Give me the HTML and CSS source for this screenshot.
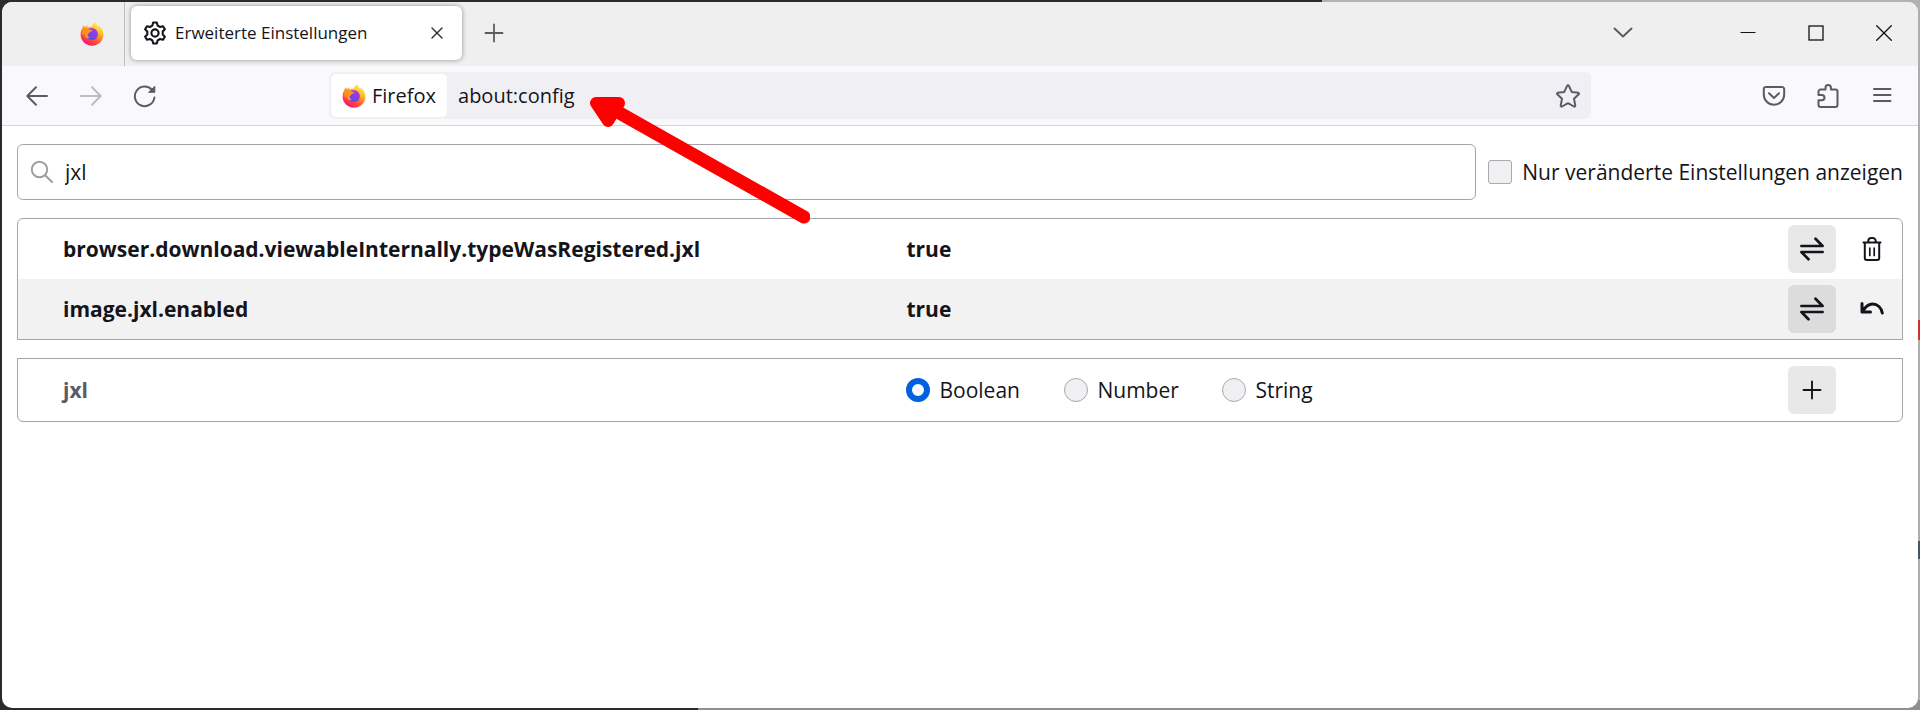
FILE: index.html
```html
<!DOCTYPE html>
<html lang="de">
<head>
<meta charset="utf-8">
<title>Erweiterte Einstellungen</title>
<link rel="stylesheet" href="styles.css">
</head>
<body>
<svg class="defs" aria-hidden="true">
  <defs>
    <linearGradient id="fire" x1="0.8" y1="0.05" x2="0.3" y2="1">
      <stop offset="0" stop-color="#fff44f"/>
      <stop offset="0.3" stop-color="#ffc22e"/>
      <stop offset="0.55" stop-color="#ff7a2a"/>
      <stop offset="0.8" stop-color="#ff3647"/>
      <stop offset="1" stop-color="#e31587"/>
    </linearGradient>
    <linearGradient id="globe" x1="0.7" y1="0" x2="0.3" y2="1">
      <stop offset="0" stop-color="#b833e1"/>
      <stop offset="0.4" stop-color="#8a3fe8"/>
      <stop offset="1" stop-color="#5b4fd8"/>
    </linearGradient>
    <linearGradient id="fox" x1="0" y1="0" x2="1" y2="0.6">
      <stop offset="0" stop-color="#ff8a16"/>
      <stop offset="1" stop-color="#ff9a2c"/>
    </linearGradient>
    <symbol id="firefox" viewBox="0 0 24 24">
      <path fill="url(#fire)" d="M15.400 0c0.200 2.200 1.600 3.200 3.200 4.800c-0.100-0.500 0.100-1 0.300-1.300c2.800 2 4.600 5.600 4.600 9.100c0 6.200-5.100 11.200-11.400 11.200C5.700 23.800 0.600 18.900 0.600 12.600c0-3.200 1-5.500 1.900-6.700c0.100-1 0.300-2 0.800-2.600c0.500 0.600 1 1.200 1.600 1.600c1-0.800 1.700-1.300 2.600-1.600c-0.200 1-0.100 1.600 0.100 2.200c1.600-1 3-1.200 4.100-0.800c0.400-1.700 1.900-3.700 3.700-4.700z"/>
      <path fill="url(#globe)" d="M8.500 6.700c2.500-1.200 6-0.600 7.900 1.600c2.100 2.400 1.900 6-0.200 8.100c-2.300 2.200-6.300 2.200-8.500-0.100c-1.600-1.700-2-4.300-1.200-6.300z"/>
      <path fill="url(#fox)" d="M2.700 6.600c1.700-0.900 3.500-0.800 5-0.200c1.500 1.100 2.800 1.200 4.600 1.500c-0.200 1.200-1.400 1.500-2.500 2.100c-0.800 0.500-0.500 1.300-1.300 1.500c-0.700 0.300-1 1.100-0.800 2c0.300 1 1 1.600 1.900 1.900c-0.900 0.700-2 1-3 0.700c-1.600-1.100-2.200-2.900-1.900-4.600c-0.800 0.300-1.400 1.300-1.600 2.300c-1.200-2.200-1.400-5.100-0.400-7.200z"/>
    </symbol>
    <symbol id="toggle" viewBox="0 0 24 24">
      <path d="M1.400 9H22.600L15.500 1.700M22.600 15H1.400L8.500 22.300" fill="none" stroke="currentColor" stroke-width="2.700" stroke-linecap="round" stroke-linejoin="round"/>
    </symbol>
  </defs>
</svg>

<div class="window">
  <header class="titlebar">
    <div class="pinned"><button class="plain" aria-label="Firefox"><svg class="i24"><use href="#firefox"/></svg></button></div>
    <div class="tab">
      <svg class="i24" viewBox="0 0 24 24" fill="none" stroke="#15141a" stroke-width="2.100" stroke-linejoin="round"><path d="M9.400 4.600L10.200 1.500H13.800L14.600 4.600L17.100 6L20 5.200L21.900 8.300L19.700 10.500V13.500L21.900 15.700L20 18.800L17.100 18L14.600 19.400L13.800 22.500H10.200L9.400 19.400L6.900 18L4 18.800L2.100 15.700L4.300 13.500V10.500L2.100 8.300L4 5.200L6.900 6Z"/><circle cx="12" cy="12" r="3.600"/></svg>
      <span class="tab-title">Erweiterte Einstellungen</span>
      <button class="plain tab-close" aria-label="Tab schließen"><svg class="i12" viewBox="0 0 12 12"><path d="M1 1L11 11M11 1L1 11" stroke="#2b2a33" stroke-width="1.400" stroke-linecap="round"/></svg></button>
    </div>
    <button class="plain new-tab" aria-label="Neuer Tab"><svg class="i20" viewBox="0 0 20 20"><path d="M10 1.500V18.500M1.500 10H18.500" stroke="#5b5b66" stroke-width="1.800" stroke-linecap="round"/></svg></button>
    <div class="caption">
      <button class="plain list-tabs" aria-label="Tabs auflisten"><svg class="i20" viewBox="0 0 20 20"><path d="M1.500 5.500L10 13.500L18.500 5.500" fill="none" stroke="#5b5b66" stroke-width="2" stroke-linecap="round" stroke-linejoin="round"/></svg></button>
      <button class="plain" aria-label="Minimieren"><svg class="i16" viewBox="0 0 16 16"><path d="M0.500 7.500H15.500" stroke="#111" stroke-width="1.200"/></svg></button>
      <button class="plain" aria-label="Maximieren"><svg class="i16" viewBox="0 0 16 16"><rect x="1" y="1" width="14" height="14" fill="none" stroke="#111" stroke-width="1.300"/></svg></button>
      <button class="plain" aria-label="Schließen"><svg class="i16" viewBox="0 0 16 16"><path d="M0.300 0.300L15.700 15.700M15.700 0.300L0.300 15.700" stroke="#111" stroke-width="1.300"/></svg></button>
    </div>
  </header>

  <nav class="toolbar">
    <div class="nav-buttons">
      <button class="plain" aria-label="Zurück"><svg class="i24" viewBox="0 0 24 24"><path d="M22 12H2.500M11 3.300L2.300 12L11 20.700" fill="none" stroke="#5b5b66" stroke-width="2" stroke-linecap="round" stroke-linejoin="round"/></svg></button>
      <button class="plain" aria-label="Vor" disabled><svg class="i24" viewBox="0 0 24 24"><path d="M2 12H21.500M13 3.300L21.700 12L13 20.700" fill="none" stroke="#bdbcc3" stroke-width="2" stroke-linecap="round" stroke-linejoin="round"/></svg></button>
      <button class="plain" aria-label="Neu laden"><svg class="i24" viewBox="0 0 24 24"><path d="M19 5.800A9.800 9.800 0 1 0 21.400 13.500" fill="none" stroke="#5b5b66" stroke-width="2" stroke-linecap="round"/><path d="M21.800 2.300V8.300H15.600z" fill="#5b5b66" stroke="#5b5b66" stroke-linejoin="round"/></svg></button>
    </div>
    <div class="urlbar">
      <button class="identity"><svg class="i24"><use href="#firefox"/></svg><span>Firefox</span></button>
      <input class="url" type="text" value="about:config" aria-label="Adresse">
      <button class="plain star" aria-label="Lesezeichen setzen"><svg class="i24" viewBox="0 0 24 24"><path d="M11.100 1.900a1 1 0 0 1 1.800 0L15.700 7.900L22.200 8.700a1 1 0 0 1 0.500 1.600L18 14.800L19.300 21.600a0.900 0.900 0 0 1-1.400 0.900L12 19.200L6.100 22.500a0.900 0.900 0 0 1-1.400-0.900L6 14.800L1.300 10.300a1 1 0 0 1 0.500-1.600L8.300 7.900z" fill="none" stroke="#5b5b66" stroke-width="2" stroke-linejoin="round"/></svg></button>
    </div>
    <div class="tools">
      <button class="plain" aria-label="Pocket"><svg class="i24" viewBox="0 0 24 24" fill="none" stroke="#5b5b66" stroke-width="2" stroke-linecap="round" stroke-linejoin="round"><path d="M4 3H20a2.200 2.200 0 0 1 2.200 2.200V10.500a10.200 10.200 0 0 1-20.400 0V5.200A2.200 2.200 0 0 1 4 3z"/><path d="M7 9.300L12 14L17 9.300"/></svg></button>
      <button class="plain" aria-label="Erweiterungen"><svg class="i24" viewBox="0 0 24 24" fill="none" stroke="#5b5b66" stroke-width="2" stroke-linejoin="round"><path d="M4.500 5.500H9.500V3.700a2.700 2.700 0 0 1 5.400 0V5.500H19.500a2 2 0 0 1 2 2V21a2 2 0 0 1-2 2H4.500a2 2 0 0 1-2-2V16.300H5.800a2.700 2.700 0 0 0 0-5.400H2.500V7.500a2 2 0 0 1 2-2z"/></svg></button>
      <button class="plain" aria-label="Menü"><svg class="i24" viewBox="0 0 24 24"><path d="M4 5H20.500M4 11H20.500M4 17H20.500" stroke="#5b5b66" stroke-width="2" stroke-linecap="round"/></svg></button>
    </div>
  </nav>

  <main class="content">
    <div class="search-row">
      <label class="search">
        <svg class="i24" viewBox="0 0 24 24" fill="none" stroke="#9f9fa3" stroke-width="2" stroke-linecap="round"><circle cx="9.500" cy="9.500" r="7.700"/><path d="M15.200 15.200L22 22"/></svg>
        <input type="text" value="jxl" aria-label="Einstellungsname suchen">
      </label>
      <label class="only-modified"><input type="checkbox"><span>Nur veränderte Einstellungen anzeigen</span></label>
    </div>

    <table class="prefs">
      <colgroup><col class="col-name"><col><col class="col-button"><col class="col-button"></colgroup>
      <tbody>
        <tr>
          <th scope="row">browser.download.viewableInternally.typeWasRegistered.jxl</th>
          <td class="value">true</td>
          <td class="action"><button class="box" aria-label="Umschalten"><svg class="i24"><use href="#toggle"/></svg></button></td>
          <td class="action"><button class="box ghost" aria-label="Löschen"><svg class="i24" viewBox="0 0 24 24" fill="none" stroke="#15141a" stroke-width="2" stroke-linecap="round"><path d="M3.500 5.500H20.500M8.300 5V4a3 3 0 0 1 3-3H12.700a3 3 0 0 1 3 3V5M4.800 6V21a2 2 0 0 0 2 2H17.200a2 2 0 0 0 2-2V6"/><path d="M9.800 11V18.500M14.200 11V18.500" stroke-width="1.700"/></svg></button></td>
        </tr>
        <tr>
          <th scope="row">image.jxl.enabled</th>
          <td class="value">true</td>
          <td class="action"><button class="box" aria-label="Umschalten"><svg class="i24"><use href="#toggle"/></svg></button></td>
          <td class="action"><button class="box ghost" aria-label="Zurücksetzen"><svg class="i24" viewBox="0 0 24 24" fill="none" stroke="#15141a" stroke-width="3" stroke-linecap="round" stroke-linejoin="round"><path d="M2 6.500V15H10.500M2.500 14.500C5.500 9.500 8.500 7 12.500 7c5 0 8.800 3.800 9.800 9"/></svg></button></td>
        </tr>
      </tbody>
    </table>

    <form class="add">
      <span class="add-name">jxl</span>
      <div class="types">
        <label><input type="radio" name="type" checked><span>Boolean</span></label>
        <label><input type="radio" name="type"><span>Number</span></label>
        <label><input type="radio" name="type"><span>String</span></label>
      </div>
      <button class="box" type="button" aria-label="Hinzufügen"><svg class="i20" viewBox="0 0 20 20"><path d="M10 1.500V18.500M1.500 10H18.500" stroke="#15141a" stroke-width="1.900" stroke-linecap="round"/></svg></button>
    </form>
  </main>
</div>

<svg class="pointer" viewBox="0 0 222 130" aria-hidden="true"><path d="M28 17L216 123" stroke="#f00" stroke-width="13" stroke-linecap="round"/><path d="M8 9H31L20 27Z" fill="#f00" stroke="#f00" stroke-width="12" stroke-linejoin="round"/></svg>
</body>
</html>
```
FILE: styles.css
```css
* { box-sizing: border-box; }

body {
  margin: 0;
  padding: 2px;
  min-height: 100vh;
  display: flex;
  color: #15141a;
  font: 21px/28px "Open Sans", "Noto Sans", sans-serif;
  background:
    linear-gradient(#c33, #c33) right 320px / 2px 20px no-repeat,
    linear-gradient(#456, #456) right 541px / 2px 18px no-repeat,
    linear-gradient(90deg, #2b2b2b 1322px, #b2b2b2 1322px) top / 100% 10px no-repeat,
    linear-gradient(90deg, #2b2b2b 698px, #8f8f8f 698px) bottom / 100% 10px no-repeat,
    linear-gradient(90deg, #2b2b2b 50%, #adadad 50%);
}

input, button { font: inherit; color: inherit; margin: 0; }

svg { display: block; flex: none; }
.defs { position: absolute; width: 0; height: 0; }
.i12 { width: 12px; height: 12px; }
.i16 { width: 16px; height: 16px; }
.i20 { width: 20px; height: 20px; }
.i24 { width: 24px; height: 24px; }

.window {
  flex: 1;
  min-width: 0;
  border-radius: 10px;
  background: #fff;
  overflow: hidden;
}

.plain {
  border: 0;
  padding: 0;
  background: none;
  display: flex;
  align-items: center;
  justify-content: center;
}

/* Title bar */
.titlebar {
  height: 64px;
  padding-bottom: 2px;
  background: #efefef;
  display: flex;
  align-items: center;
}
.pinned {
  width: 123px;
  height: 64px;
  margin-bottom: -2px;
  padding-right: 20px;
  border-right: 1px solid #bdbdbd;
  display: flex;
  align-items: center;
  justify-content: flex-end;
}
.tab {
  width: 331px;
  height: 54px;
  margin-left: 6px;
  padding: 0 19px 0 12px;
  border-radius: 6px;
  background: #fff;
  box-shadow: 0 0 5px rgba(0, 0, 0, 0.4);
  display: flex;
  align-items: center;
  gap: 8px;
  font-size: 17px;
}
.tab-title { flex: 1; white-space: nowrap; }
.new-tab { margin-left: 22px; }
.caption {
  margin-left: auto;
  display: flex;
  align-items: center;
}
.caption .plain { width: 68px; height: 60px; }
.caption .list-tabs { margin-right: 57px; }

/* Navigation bar */
.toolbar {
  height: 60px;
  background: #f9f9fb;
  border-bottom: 1px solid #d5d5d8;
  display: flex;
  align-items: center;
}
.nav-buttons { display: flex; gap: 30px; padding-left: 23px; }
.urlbar {
  flex: 1;
  height: 47px;
  margin: 0 171px 0 172px;
  padding: 2px 11px 2px 2px;
  border-radius: 6px;
  background: #f0f0f4;
  display: flex;
  align-items: center;
}
.identity {
  height: 43px;
  padding: 0 11px;
  border: 0;
  border-radius: 5px;
  background: #fff;
  display: flex;
  align-items: center;
  gap: 6px;
  font-size: 20px;
}
.url {
  flex: 1;
  min-width: 0;
  padding: 0 11px;
  border: 0;
  outline: 0;
  background: none;
  font-size: 20px;
}
.tools { display: flex; gap: 30px; padding-right: 24px; }

/* Page */
.content {
  padding: 18px 15px;
  display: flex;
  flex-direction: column;
  gap: 18px;
}
.search-row { display: flex; align-items: center; gap: 12px; }
.search {
  flex: 1;
  height: 56px;
  padding: 0 12px;
  border: 1px solid #a5a5a9;
  border-radius: 6px;
  display: flex;
  align-items: center;
  gap: 11px;
}
.search input {
  flex: 1;
  min-width: 0;
  padding: 0;
  border: 0;
  outline: 0;
  background: none;
}
.only-modified { display: flex; align-items: center; gap: 10px; white-space: nowrap; }
input[type="checkbox"], input[type="radio"] {
  appearance: none;
  width: 24px;
  height: 24px;
  border: 1px solid #a9a9ad;
  background: #f0f0f2;
}
input[type="checkbox"] { border-radius: 3px; }
input[type="radio"] { border-radius: 50%; }
input[type="radio"]:checked { border: 6px solid #0061e0; background: #fbfbfe; }

.prefs {
  width: 100%;
  table-layout: fixed;
  border: 1px solid #a5a5a9;
  border-radius: 6px 6px 0 0;
  border-spacing: 0;
}
.col-name { width: 47%; }
.col-button { width: 60px; }
.prefs th, .prefs td { height: 60px; padding: 0; text-align: left; font-weight: 700; }
.prefs th { padding-left: 45px; }
.prefs .value { padding-left: 3px; }
.prefs .action { padding: 0 6px; }
.prefs tr:nth-child(even) { background: #f2f2f2; }

.box {
  width: 48px;
  height: 48px;
  padding: 0;
  border: 0;
  border-radius: 6px;
  background: rgba(0, 0, 0, 0.09);
  display: flex;
  align-items: center;
  justify-content: center;
}
.box.ghost { background: none; }

.add {
  height: 64px;
  border: 1px solid #a5a5a9;
  border-radius: 0 0 6px 6px;
  display: flex;
  align-items: center;
}
.add-name {
  width: 47%;
  padding-left: 45px;
  font-weight: 700;
  color: #5b5b66;
}
.types { flex: 1; display: flex; padding-left: 3px; }
.types label { width: 158px; display: flex; align-items: center; gap: 9px; }
.add .box { margin-right: 66px; }

/* Marker arrow lying over the page */
.pointer {
  position: absolute;
  left: 588px;
  top: 94px;
  width: 222px;
  height: 130px;
}
```
